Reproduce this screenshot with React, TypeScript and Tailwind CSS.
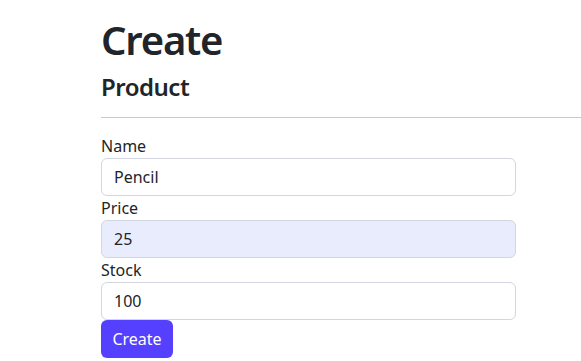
import { useState } from 'react';

const font = { fontFamily: '"Noto Sans", "Open Sans", sans-serif' };

function Field({ label, value, autofill }: { label: string; value: string; autofill?: boolean }) {
  const [v, setV] = useState(value);
  return (
    <div className="flex flex-col">
      <label className="text-[16px] leading-[24px] text-[#212529]">{label}</label>
      <input
        value={v}
        onChange={(e) => setV(e.target.value)}
        className={`h-[38px] w-[415px] rounded-[6px] border border-[#d3d6e0] px-3 text-[16px] text-[#212529] outline-none ${
          autofill ? 'bg-[#e8ecfd]' : 'bg-white'
        }`}
      />
    </div>
  );
}

export default function App() {
  return (
    <div className="min-h-[361px] w-[581px] overflow-hidden bg-white pl-[101px] pt-4" style={font}>
      <h1 className="mb-2 text-[40px] font-semibold leading-[48px] tracking-[-1.2px] text-[#212529]">Create</h1>
      <h4 className="text-[24px] font-semibold leading-[29px] tracking-[-0.5px] text-[#212529]">Product</h4>
      <hr className="my-4 w-[500px] border-0 border-t border-[#c8c9ca]" />
      <form className="flex flex-col" onSubmit={(e) => e.preventDefault()}>
        <Field label="Name" value="Pencil" />
        <Field label="Price" value="25" autofill />
        <Field label="Stock" value="100" />
        <div>
          <button
            type="submit"
            className="h-[38px] w-[72px] rounded-[6px] bg-[#5540ff] text-[16px] text-white"
          >
            Create
          </button>
        </div>
      </form>
    </div>
  );
}
